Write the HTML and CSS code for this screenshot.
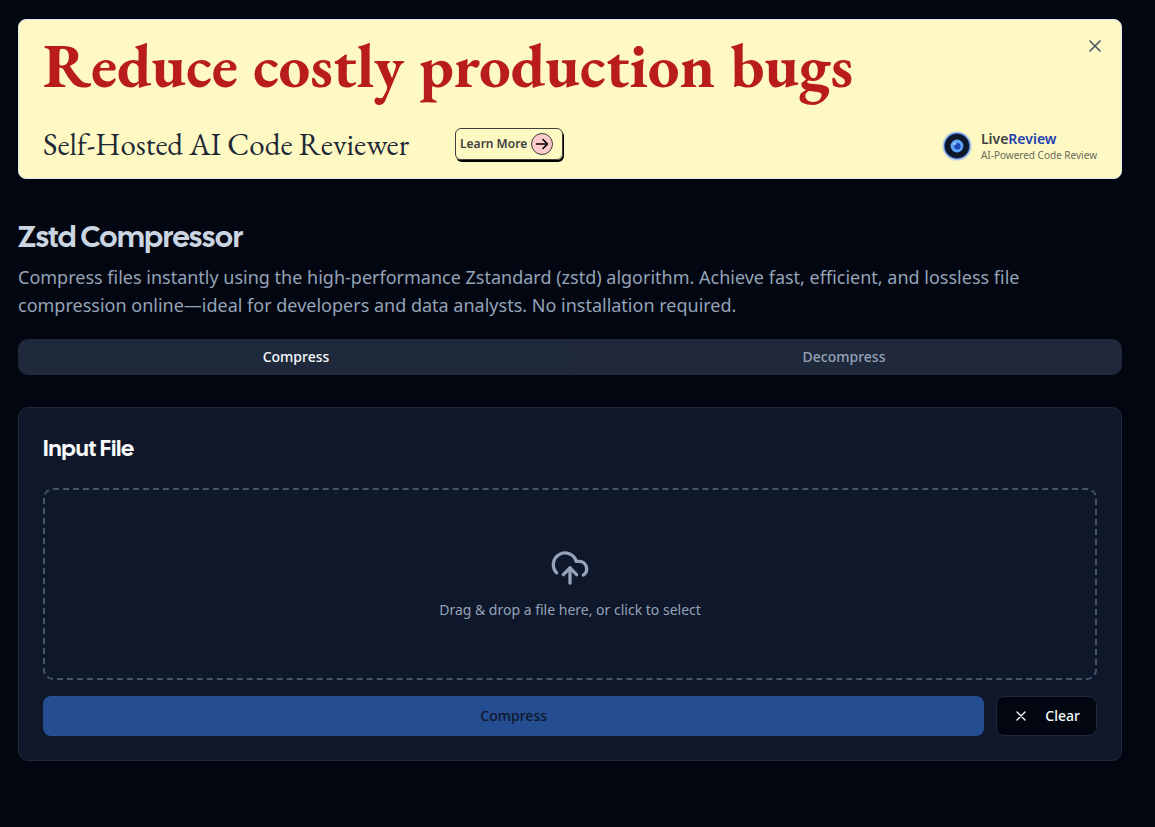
FILE: index.html
```html
<!DOCTYPE html>
<html lang="en">
<head>
<meta charset="utf-8">
<meta name="viewport" content="width=device-width, initial-scale=1">
<title>Zstd Compressor</title>
<link rel="stylesheet" href="styles.css">
</head>
<body>
<main class="page">
  <aside class="banner">
    <div class="banner-top">
      <p class="banner-title">Reduce costly production bugs</p>
      <button class="banner-close" type="button" aria-label="Close">
        <svg width="20" height="20" viewBox="0 0 24 24" fill="none" stroke="currentColor" stroke-width="2" stroke-linecap="round"><path d="M18 6 6 18M6 6l12 12"/></svg>
      </button>
    </div>
    <div class="banner-bottom">
      <p class="banner-subtitle">Self-Hosted AI Code Reviewer</p>
      <a class="learn" href="#">Learn More
        <span class="learn-icon"><svg width="16" height="16" viewBox="0 0 16 16" fill="none" stroke="currentColor" stroke-width="1.6" stroke-linecap="round" stroke-linejoin="round"><path d="M2.5 8h11M9 3.5 13.5 8 9 12.5"/></svg></span>
      </a>
      <div class="brand">
        <svg class="brand-logo" width="30" height="30" viewBox="0 0 30 30">
          <circle cx="15" cy="15" r="14.8" fill="#93b4ef" opacity=".45"/>
          <circle cx="15" cy="15" r="13.7" fill="#93b4ef" opacity=".7"/>
          <circle cx="15" cy="15" r="12.9" fill="#2f5fb8"/>
          <circle cx="15" cy="15" r="12" fill="#0f172a"/>
          <circle cx="15" cy="15" r="6.4" fill="#60a5fa"/>
          <circle cx="15.4" cy="15.2" r="3.2" fill="#1e48b8"/>
          <circle cx="12.8" cy="12.8" r="1.3" fill="#a9d0ff"/>
        </svg>
        <div>
          <p class="brand-name">Live<span class="brand-accent">Review</span></p>
          <p class="brand-tag">AI-Powered Code Review</p>
        </div>
      </div>
    </div>
  </aside>

  <header class="intro">
    <h1>Zstd Compressor</h1>
    <p>Compress files instantly using the high-performance Zstandard (zstd) algorithm. Achieve fast, efficient, and lossless file compression online—ideal for developers and data analysts. No installation required.</p>
  </header>

  <div class="tabs" role="tablist">
    <button class="tab tab-active" type="button" role="tab" aria-selected="true">Compress</button>
    <button class="tab" type="button" role="tab" aria-selected="false">Decompress</button>
  </div>

  <section class="card">
    <h2>Input File</h2>
    <button class="dropzone" type="button">
      <svg width="40" height="40" viewBox="0 0 24 24" fill="none" stroke="currentColor" stroke-width="2" stroke-linecap="round" stroke-linejoin="round"><path d="M4 14.899A7 7 0 1 1 15.71 8h1.79a4.5 4.5 0 0 1 2.5 8.242"/><path d="M12 12v9"/><path d="m16 16-4-4-4 4"/></svg>
      <span>Drag &amp; drop a file here, or click to select</span>
    </button>
    <div class="actions">
      <button class="submit" type="button" disabled>Compress</button>
      <button class="clear" type="button">
        <svg width="16" height="16" viewBox="0 0 24 24" fill="none" stroke="currentColor" stroke-width="2" stroke-linecap="round"><path d="M18 6 6 18M6 6l12 12"/></svg>
        Clear
      </button>
    </div>
  </section>
</main>
</body>
</html>
```
FILE: styles.css
```css
* {
  box-sizing: border-box;
}

body {
  margin: 0;
  background: #020610;
  color: #f8fafc;
  font-family: "Noto Sans", sans-serif;
  font-size: 14px;
  line-height: 20px;
}

h1, h2, p {
  margin: 0;
}

button {
  margin: 0;
  padding: 0;
  border: 0;
  background: none;
  color: inherit;
  font: inherit;
  cursor: pointer;
}

svg {
  display: block;
}

.page {
  padding: 19px 33px 66px 18px;
}

.banner {
  padding: 16px 24px;
  border: 1px solid #e2e8f0;
  border-radius: 8px;
  background: #fef9c3;
  color: #1f2937;
}

.banner-top {
  display: flex;
  justify-content: space-between;
  align-items: flex-start;
}

.banner-title {
  color: #b91c1c;
  font-family: "EB Garamond", "Liberation Serif", serif;
  font-size: 63px;
  font-weight: 700;
  line-height: 58px;
}

.banner-close {
  margin-right: -8px;
  color: #4b5563;
}

.banner-bottom {
  display: flex;
  align-items: flex-end;
  margin-top: 32px;
}

.banner-subtitle {
  font-family: "EB Garamond", "Liberation Serif", serif;
  font-size: 31px;
  line-height: 36px;
}

.learn {
  display: flex;
  align-items: center;
  align-self: center;
  gap: 4px;
  height: 32px;
  margin-left: 46px;
  padding: 0 9px 0 4px;
  border: 1px solid #404040;
  border-radius: 6px;
  box-shadow: 1px 2px 0 #000;
  color: #404040;
  font-size: 12px;
  font-weight: 600;
  text-decoration: none;
}

.learn-icon {
  display: grid;
  place-items: center;
  width: 22px;
  height: 22px;
  border: 1px solid #404040;
  border-radius: 50%;
  background: #fecaca;
  color: #000;
}

.brand {
  display: flex;
  align-items: center;
  gap: 9px;
  margin-left: auto;
}

.brand-name {
  color: #404040;
  font-weight: 600;
  line-height: 18px;
}

.brand-accent {
  color: #1e40af;
}

.brand-tag {
  color: #6b6a5c;
  font-size: 10px;
  line-height: 14px;
}

.intro {
  margin: 40px 0 20px;
}

h1 {
  margin-bottom: 8px;
  color: #cbd5e1;
  font-family: "Cal Sans", Lato, sans-serif;
  font-size: 30px;
  font-weight: 400;
  line-height: 36px;
}

.intro p {
  color: #94a3b8;
  font-size: 18px;
  line-height: 28px;
}

.tabs {
  display: grid;
  grid-template-columns: 1fr 1fr;
  padding: 4px;
  border-radius: 10px;
  background: #1f293b;
}

.tab {
  height: 28px;
  border-radius: 6px;
  color: #94a3b8;
  font-weight: 500;
}

.tab-active {
  background: #1e293b;
  color: #f8fafc;
}

.card {
  margin-top: 32px;
  padding: 24px;
  border: 1px solid #1e293b;
  border-radius: 10px;
  background: #0f172a;
}

h2 {
  margin-bottom: 24px;
  font-family: "Cal Sans", Lato, sans-serif;
  font-size: 23px;
  font-weight: 400;
  line-height: 32px;
}

.dropzone {
  display: flex;
  flex-direction: column;
  align-items: center;
  justify-content: center;
  gap: 12px;
  width: 100%;
  height: 192px;
  border: 2px dashed #475569;
  border-radius: 10px;
  color: #94a3b8;
}

.actions {
  display: flex;
  gap: 12px;
  margin-top: 16px;
}

.submit,
.clear {
  height: 40px;
  border-radius: 8px;
  font-weight: 500;
}

.submit {
  flex: 1;
  background: #254d91;
  color: #0f172a;
}

.clear {
  display: flex;
  align-items: center;
  gap: 16px;
  padding: 0 16px;
  border: 1px solid #1e293b;
  background: #020610;
}
```
